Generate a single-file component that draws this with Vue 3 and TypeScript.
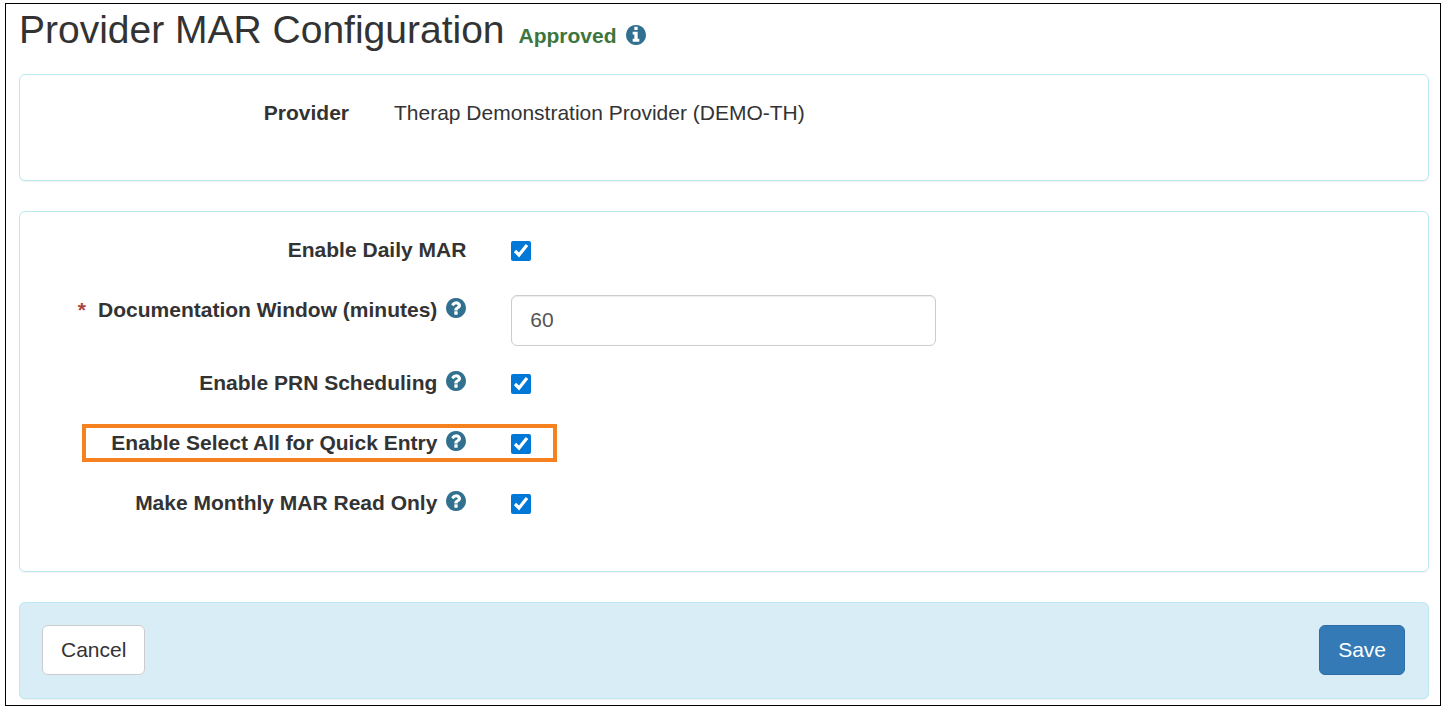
<script setup lang="ts">
import { reactive } from 'vue'

interface Setting {
  id: string
  label: string
  kind: 'check' | 'number'
  help?: boolean
  required?: boolean
  highlight?: boolean
}

const settings: Setting[] = [
  { id: 'dailyMar', label: 'Enable Daily MAR', kind: 'check' },
  { id: 'docWindow', label: 'Documentation Window (minutes)', kind: 'number', help: true, required: true },
  { id: 'prnScheduling', label: 'Enable PRN Scheduling', kind: 'check', help: true },
  { id: 'selectAll', label: 'Enable Select All for Quick Entry', kind: 'check', help: true, highlight: true },
  { id: 'monthlyReadOnly', label: 'Make Monthly MAR Read Only', kind: 'check', help: true },
]

const checks = reactive<Record<string, boolean>>({
  dailyMar: true,
  prnScheduling: true,
  selectAll: true,
  monthlyReadOnly: true,
})
const texts = reactive<Record<string, string>>({ docWindow: '60' })
</script>

<template>
  <main class="frame">
    <header class="header">
      <h1 class="title">Provider MAR Configuration</h1>
      <span class="status">Approved</span>
      <svg class="icon" viewBox="0 0 1536 1536" aria-hidden="true">
        <path d="M1024 1248v-160q0-14-9-23t-23-9h-96v-512q0-14-9-23t-23-9h-320q-14 0-23 9t-9 23v160q0 14 9 23t23 9h96v320h-96q-14 0-23 9t-9 23v160q0 14 9 23t23 9h448q14 0 23-9t9-23zm-128-896v-192q0-14-9-23t-23-9h-192q-14 0-23 9t-9 23v192q0 14 9 23t23 9h192q14 0 23-9t9-23zm640 416q0 209-103 385.5t-279.5 279.5-385.5 103-385.5-103-279.5-279.5-103-385.5 103-385.5 279.5-279.5 385.5-103 385.5 103 279.5 279.5 103 385.5z" />
      </svg>
    </header>

    <section class="panel">
      <dl class="row summary">
        <dt class="label">Provider</dt>
        <dd class="value">Therap Demonstration Provider (DEMO-TH)</dd>
      </dl>
    </section>

    <form class="form" @submit.prevent>
      <section class="panel settings">
        <div v-for="s in settings" :key="s.id" class="row" :class="{ highlight: s.highlight }">
          <div class="label">
            <span v-if="s.required" class="required">*</span>
            <label :for="s.id">{{ s.label }}</label>
            <svg v-if="s.help" class="icon help" viewBox="0 0 1536 1536" aria-hidden="true">
              <path d="M896 1248v-192q0-14-9-23t-23-9h-192q-14 0-23 9t-9 23v192q0 14 9 23t23 9h192q14 0 23-9t9-23zm256-672q0-88-55.5-163t-138.5-116-170-41q-243 0-371 213-15 24 8 42l132 100q7 6 19 6 16 0 25-12 53-68 86-92 34-24 86-24 48 0 85.5 26t37.5 59q0 38-20 61t-68 45q-63 28-115.5 86.5t-52.5 125.5v36q0 14 9 23t23 9h192q14 0 23-9t9-23q0-19 21.5-49.5t54.5-49.5q32-18 49-28.5t46-35 44.5-48 28-60.5 12.5-81zm384 192q0 209-103 385.5t-279.5 279.5-385.5 103-385.5-103-279.5-279.5-103-385.5 103-385.5 279.5-279.5 385.5-103 385.5 103 279.5 279.5 103 385.5z" />
            </svg>
          </div>
          <div class="value">
            <input v-if="s.kind === 'check'" :id="s.id" v-model="checks[s.id]" class="check" type="checkbox" />
            <input v-else :id="s.id" v-model="texts[s.id]" class="text" type="text" />
          </div>
        </div>
      </section>

      <footer class="panel actions">
        <button type="button" class="btn">Cancel</button>
        <button type="submit" class="btn primary">Save</button>
      </footer>
    </form>
  </main>
</template>

<style>
body {
  margin: 0;
  background: #fff;
}
</style>

<style scoped>
.frame {
  display: flex;
  flex-direction: column;
  margin: 3px 5px;
  padding: 0 11px 6px 13px;
  border: 1px solid #000;
  color: #333;
  font-family: "Liberation Sans", Arial, Helvetica, sans-serif;
  font-size: 21px;
  line-height: 30px;
}
.header {
  display: flex;
  align-items: baseline;
  margin-bottom: 18px;
}
.title {
  margin: 0 14px 0 0;
  font-size: 39px;
  font-weight: 400;
  line-height: 52px;
}
.status {
  color: #3c763d;
  font-weight: 700;
}
.icon {
  flex: none;
  width: 20px;
  height: 20px;
  margin-left: 9px;
  fill: #31708f;
}
.header .icon {
  align-self: center;
  margin-top: 9px;
}
.form {
  display: flex;
  flex-direction: column;
  gap: 30px;
}
.panel {
  padding: 23px 0 22px;
  border: 1px solid #bce8f1;
  border-radius: 6px;
  background: #fff;
  box-shadow: 0 1px 1px rgba(0, 0, 0, 0.05);
}
.frame > .panel {
  margin-bottom: 30px;
}
.settings {
  padding-bottom: 23px;
}
.row {
  position: relative;
  display: grid;
  grid-template-columns: 1fr 1fr 1fr;
  min-height: 38px;
  margin: 0 0 22px;
}
.summary {
  grid-template-columns: 1fr 3fr;
}
.label {
  display: flex;
  justify-content: flex-end;
  padding: 0 23px 0 22px;
  font-weight: 700;
  white-space: nowrap;
}
.required {
  margin-right: 12px;
  color: #a94442;
}
.help {
  margin-top: 3px;
}
.value {
  margin: 0;
  padding: 0 23px 0 22px;
}
.check {
  display: block;
  width: 20px;
  height: 20px;
  margin: 6px 0 0;
  accent-color: #0078d7;
}
.text {
  display: block;
  box-sizing: border-box;
  width: 100%;
  height: 51px;
  padding: 0 18px 2px;
  border: 1px solid #ccc;
  border-radius: 6px;
  background: #fff;
  box-shadow: inset 0 1px 1px rgba(0, 0, 0, 0.075);
  color: #555;
  font: inherit;
}
.highlight::after {
  content: "";
  position: absolute;
  top: -4px;
  left: calc(100% / 3 - 407px);
  box-sizing: border-box;
  width: 475px;
  height: 38px;
  border: 4px solid #f5821f;
  pointer-events: none;
}
.actions {
  display: flex;
  justify-content: space-between;
  padding: 22px 23px 23px 22px;
  background: #d9edf7;
}
.btn {
  height: 50px;
  padding: 0 18px;
  border: 1px solid #ccc;
  border-radius: 6px;
  background: #fff;
  color: #333;
  font: inherit;
}
.primary {
  border-color: #2e6da4;
  background: #337ab7;
  color: #fff;
}
</style>
